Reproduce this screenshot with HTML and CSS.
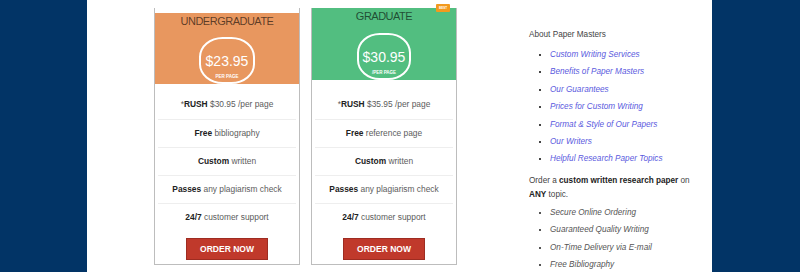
FILE: index.html
```html
<!DOCTYPE html>
<html lang="en">
<head>
  <meta charset="UTF-8">
  <title>Paper Masters - Prices</title>
  <link rel="stylesheet" href="styles.css">
</head>
<body>
  <div class="pagina">
    <div class="conteudo">

      <div class="tabela-precos">
        <div class="plano plano-laranja">
          <div class="plano-topo">
            <div class="plano-titulo">UNDERGRADUATE</div>
            <div class="preco-circulo">
              <span class="preco">$23.95</span>
              <span class="por-pagina">PER PAGE</span>
            </div>
          </div>
          <ul class="plano-itens">
            <li>*<b>RUSH</b> $30.95 /per page</li>
            <li><b>Free</b> bibliography</li>
            <li><b>Custom</b> written</li>
            <li><b>Passes</b> any plagiarism check</li>
            <li><b>24/7</b> customer support</li>
          </ul>
          <button class="botao-pedido">ORDER NOW</button>
        </div>

        <div class="plano plano-verde">
          <span class="selo">BEST</span>
          <div class="plano-topo">
            <div class="plano-titulo">GRADUATE</div>
            <div class="preco-circulo">
              <span class="preco">$30.95</span>
              <span class="por-pagina">/PER PAGE</span>
            </div>
          </div>
          <ul class="plano-itens">
            <li>*<b>RUSH</b> $35.95 /per page</li>
            <li><b>Free</b> reference page</li>
            <li><b>Custom</b> written</li>
            <li><b>Passes</b> any plagiarism check</li>
            <li><b>24/7</b> customer support</li>
          </ul>
          <button class="botao-pedido">ORDER NOW</button>
        </div>
      </div>

      <div class="lateral">
        <p class="lateral-titulo">About Paper Masters</p>
        <ul class="lista-links">
          <li><a href="#">Custom Writing Services</a></li>
          <li><a href="#">Benefits of Paper Masters</a></li>
          <li><a href="#">Our Guarantees</a></li>
          <li><a href="#">Prices for Custom Writing</a></li>
          <li><a href="#">Format &amp; Style of Our Papers</a></li>
          <li><a href="#">Our Writers</a></li>
          <li><a href="#">Helpful Research Paper Topics</a></li>
        </ul>
        <p class="lateral-texto">Order a <b>custom written research paper</b> on <b>ANY</b> topic.</p>
        <ul class="lista-beneficios">
          <li>Secure Online Ordering</li>
          <li>Guaranteed Quality Writing</li>
          <li>On-Time Delivery via E-mail</li>
          <li>Free Bibliography</li>
        </ul>
      </div>

    </div>
  </div>
</body>
</html>
```

FILE: styles.css
```css
body {
  margin: 0;
  font-family: 'Liberation Sans', Arial, sans-serif;
  background: #023466;
  height: 272px;
  overflow: hidden;
}

.pagina {
  display: flex;
  justify-content: flex-start;
}

.conteudo {
  margin-left: 87px;
  width: 625px;
  height: 272px;
  background: #fff;
  display: flex;
  padding-left: 67px;
  box-sizing: border-box;
}

.tabela-precos {
  display: flex;
  gap: 11px;
  padding-top: 8px;
}

.plano {
  width: 146px;
  height: 257px;
  border: 1px solid #bdbdbd;
  border-top: none;
  box-sizing: border-box;
  position: relative;
  display: flex;
  flex-direction: column;
  align-items: center;
}

.plano-topo {
  width: 100%;
  display: flex;
  flex-direction: column;
  align-items: center;
}

.plano-laranja .plano-topo {
  background: #e8975f;
  margin-top: 5px;
  height: 71px;
  margin-bottom: 7px;
}

.plano-verde .plano-topo {
  background: #52be80;
  height: 72px;
  margin-bottom: 11px;
}

.plano-titulo {
  font-size: 11px;
  letter-spacing: -0.5px;
  line-height: 16px;
  color: rgba(0, 0, 0, 0.62);
}

.preco-circulo {
  margin-top: 8px;
  width: 56px;
  height: 56px;
  border: 2.5px solid #fff;
  border-radius: 42%;
  box-sizing: border-box;
  background: inherit;
  display: flex;
  flex-direction: column;
  align-items: center;
  color: #fff;
}

.plano-verde .preco-circulo {
  margin-top: 9px;
  width: 54px;
  height: 55px;
}

.preco {
  font-size: 14px;
  line-height: 16px;
  margin-top: 14px;
}

.por-pagina {
  font-size: 4.5px;
  font-weight: bold;
  margin-top: 5px;
}

.plano-itens {
  list-style: none;
  margin: 0;
  padding: 0 3px;
  width: 100%;
  box-sizing: border-box;
}

.plano-itens li {
  height: 28px;
  line-height: 27px;
  box-sizing: border-box;
  text-align: center;
  font-size: 8.4px;
  color: #5c5c5c;
}

.plano-itens li + li {
  border-top: 1px solid #eee;
}

.plano-itens b {
  color: #222;
}

.botao-pedido {
  margin-top: 7px;
  width: 82px;
  height: 22px;
  background: #c0392b;
  border: 1px solid #9e2c21;
  color: #fff;
  font-family: 'Liberation Sans', Arial, sans-serif;
  font-weight: bold;
  font-size: 8.5px;
  padding: 0;
}

.selo {
  position: absolute;
  top: -4px;
  right: 6px;
  width: 14px;
  height: 8px;
  background: #f39a1e;
  border-radius: 1px;
  color: #fff;
  font-size: 3px;
  font-weight: bold;
  line-height: 8px;
  text-align: center;
}

.lateral {
  margin-left: 72px;
  font-size: 8.2px;
  color: #444;
}

.lateral-titulo {
  margin: 29px 0 0;
  line-height: 12px;
}

.lista-links,
.lista-beneficios {
  list-style: square;
  margin: 0;
  padding-left: 21px;
}

.lista-links {
  margin-top: 5px;
}

.lista-links li,
.lista-beneficios li {
  line-height: 17.4px;
  font-style: italic;
}

.lista-links a {
  color: #5a5ade;
  text-decoration: none;
}

.lista-beneficios li {
  color: #555;
}

.lateral-texto {
  margin: 6px 0 0;
  line-height: 14px;
  width: 170px;
}

.lateral-texto b {
  color: #222;
}

.lista-beneficios {
  margin-top: 2px;
}
```
